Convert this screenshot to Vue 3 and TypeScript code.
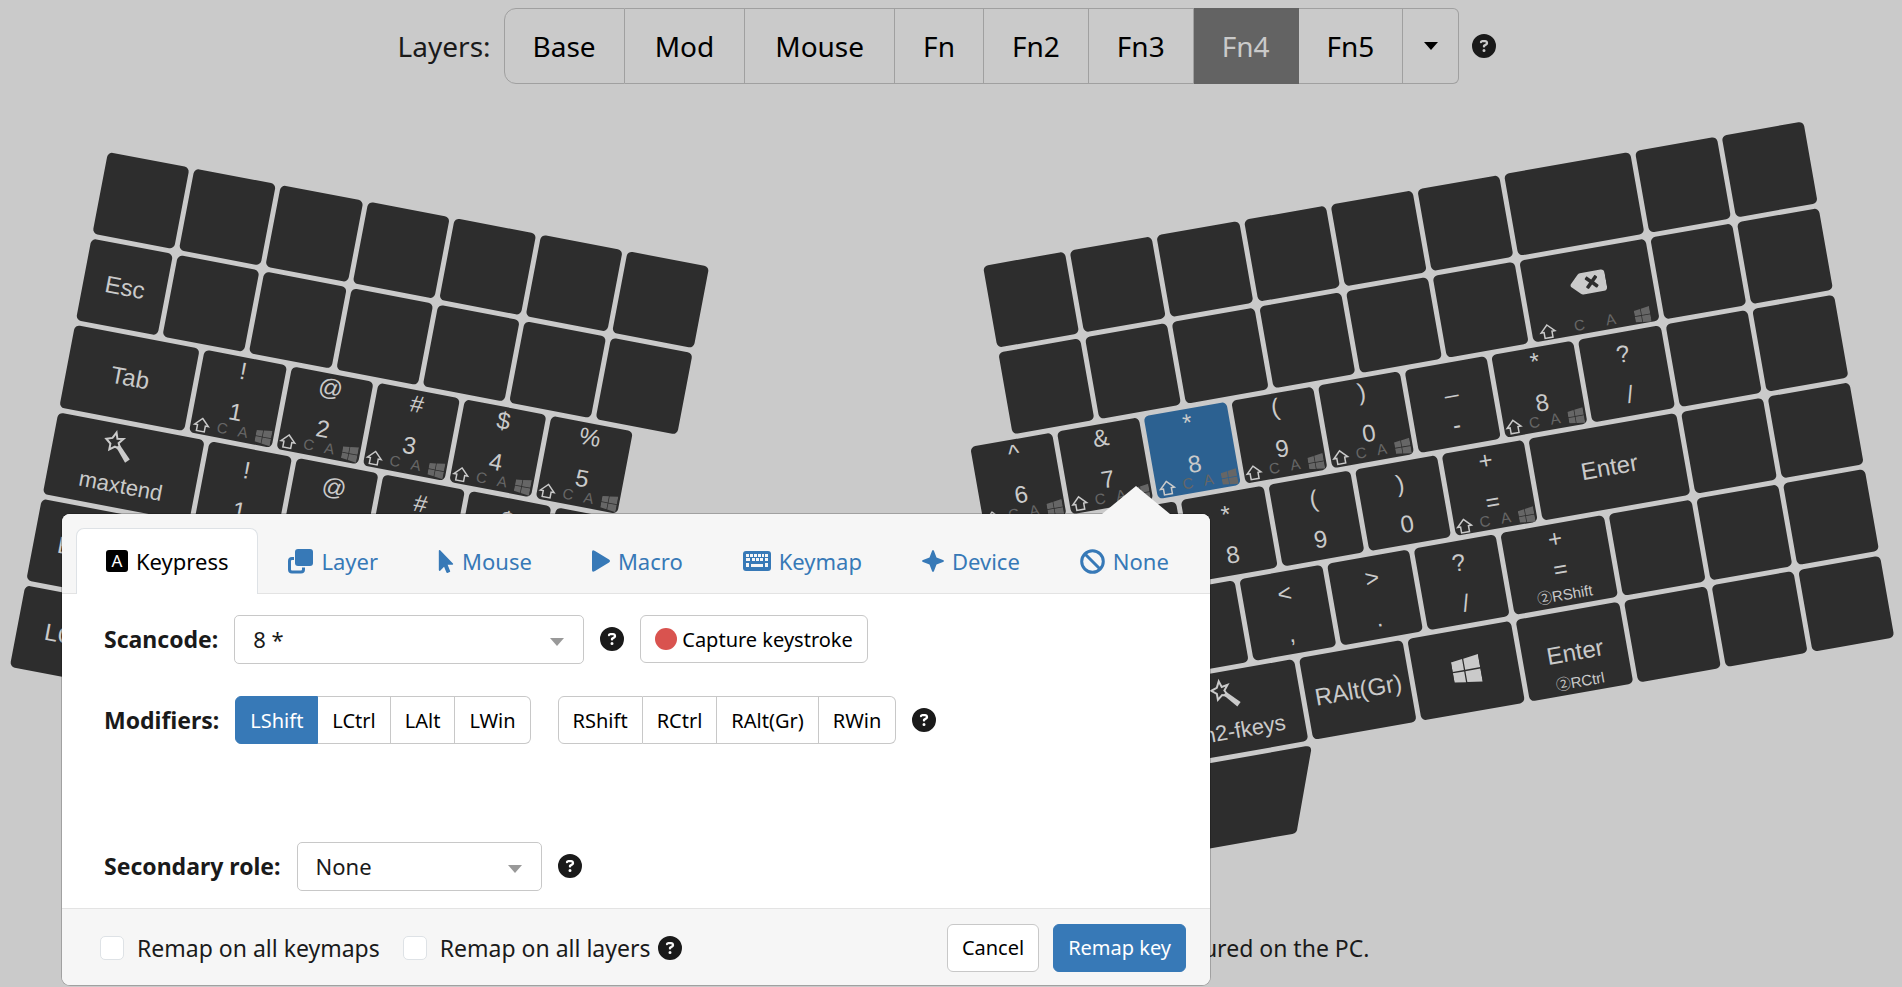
<script setup lang="ts">
import { ref } from 'vue'

interface Key {
  x: number
  y: number
  w: number
  label?: string
  top?: string
  bottom?: string
  role?: string
  icon?: 'wand' | 'win' | 'backspace'
  mods?: boolean
  selected?: boolean
}

/* Key positions and widths are in key units; one unit is PITCH wide. */
const PITCH = 88.2
const GAP = 5
const at = (units: number): number => Math.round(units * PITCH)
const keyWidth = (k: Key): number => at(k.x + k.w) - at(k.x) - GAP
const keyHeight = (k: Key): number => at(k.y + 1) - at(k.y) - GAP
const place = (k: Key): string => `translate(${at(k.x)} ${at(k.y)})`
const mid = (k: Key): number => Math.round(keyWidth(k) / 2)
const modX = (k: Key, i: number): number => Math.round((keyWidth(k) * (i * 2 + 1)) / 8)

const blanks = (y: number, from: number, count: number): Key[] =>
  Array.from({ length: count }, (_, i) => ({ x: from + i, y, w: 1 }))

const pairs = (y: number, from: number, list: string[], mods: boolean): Key[] =>
  list.map((p, i) => ({ x: from + i, y, w: 1, top: p[0], bottom: p[1], mods }))

const leftKeys: Key[] = [
  ...blanks(0, 0, 7),
  { x: 0, y: 1, w: 1, label: 'Esc' },
  ...blanks(1, 1, 6),
  { x: 0, y: 2, w: 1.5, label: 'Tab' },
  ...pairs(2, 1.5, ['!1', '@2', '#3', '$4', '%5'], true),
  { x: 0, y: 3, w: 1.75, label: 'maxtend', icon: 'wand' },
  ...pairs(3, 1.75, ['!1', '@2', '#3', '$4', '%5'], false),
  { x: 0, y: 4, w: 1.25, label: 'Enter' },
  { x: 0, y: 5, w: 1.25, label: 'LCtrl' },
]

const rightKeys: Key[] = [
  ...blanks(0, 0, 6),
  { x: 6, y: 0, w: 1.5 },
  ...blanks(0, 7.5, 2),
  ...blanks(1, 0, 6),
  { x: 6, y: 1, w: 1.5, icon: 'backspace', mods: true },
  ...blanks(1, 7.5, 2),
  ...pairs(2, -0.5, ['^6', '&7'], true),
  { x: 1.5, y: 2, w: 1, top: '*', bottom: '8', mods: true, selected: true },
  ...pairs(2, 2.5, ['(9', ')0'], true),
  { x: 4.5, y: 2, w: 1, top: '_', bottom: '-' },
  { x: 5.5, y: 2, w: 1, top: '*', bottom: '8', mods: true },
  { x: 6.5, y: 2, w: 1, top: '?', bottom: '/' },
  ...blanks(2, 7.5, 2),
  ...pairs(3, 0.75, ['&7', '*8', '(9', ')0'], false),
  { x: 4.75, y: 3, w: 1, top: '+', bottom: '=', mods: true },
  { x: 5.75, y: 3, w: 1.75, label: 'Enter' },
  ...blanks(3, 7.5, 2),
  { x: 1.25, y: 4, w: 1 },
  ...pairs(4, 2.25, ['<,', '>.', '?/'], false),
  { x: 5.25, y: 4, w: 1.25, top: '+', bottom: '=', role: 'RShift' },
  ...blanks(4, 6.5, 3),
  { x: 1.25, y: 5, w: 1.5, label: 'fn2-fkeys', icon: 'wand' },
  { x: 2.75, y: 5, w: 1.25, label: 'RAlt(Gr)' },
  { x: 4, y: 5, w: 1.25, icon: 'win' },
  { x: 5.25, y: 5, w: 1.25, label: 'Enter', role: 'RCtrl' },
  ...blanks(5, 6.5, 3),
]

const halves = [
  { name: 'left', transform: 'translate(108 152) rotate(10.8)', keys: leftKeys },
  { name: 'right', transform: 'translate(983 266) rotate(-10)', keys: rightKeys },
]

const topLine = (k: Key): number => (k.mods ? 22 : k.role ? 23 : 30)
const bottomLine = (k: Key): number => (k.mods ? 64 : k.role ? 54 : 71)

const layers = ['Base', 'Mod', 'Mouse', 'Fn', 'Fn2', 'Fn3', 'Fn4', 'Fn5']
const activeLayer = ref('Fn4')

const tabs = ['Keypress', 'Layer', 'Mouse', 'Macro', 'Keymap', 'Device', 'None']
const activeTab = ref('Keypress')

const modifierGroups = [
  ['LShift', 'LCtrl', 'LAlt', 'LWin'],
  ['RShift', 'RCtrl', 'RAlt(Gr)', 'RWin'],
]
const activeModifiers = ref<string[]>(['LShift'])
const toggleModifier = (name: string): void => {
  activeModifiers.value = activeModifiers.value.includes(name)
    ? activeModifiers.value.filter((m) => m !== name)
    : [...activeModifiers.value, name]
}
</script>

<template>
  <main class="page">
    <svg class="defs" aria-hidden="true">
      <symbol id="help" viewBox="0 0 512 512">
        <path d="M256 512A256 256 0 1 0 256 0a256 256 0 1 0 0 512zM169.8 165.3c7.9-22.3 29.1-37.3 52.8-37.3l58.3 0c34.9 0 63.1 28.3 63.1 63.1c0 22.6-12.1 43.5-31.7 54.8L280 264.4c-.2 13-10.9 23.6-24 23.6c-13.3 0-24-10.7-24-24l0-13.5c0-8.6 4.6-16.5 12.1-20.8l44.3-25.4c4.7-2.7 7.6-7.7 7.6-13.1c0-8.4-6.8-15.1-15.1-15.1l-58.3 0c-3.4 0-6.4 2.1-7.5 5.3l-.4 1.2c-4.4 12.5-18.2 19-30.6 14.6s-19-18.2-14.6-30.6l.4-1.2zM224 352a32 32 0 1 1 64 0 32 32 0 1 1 -64 0z" />
      </symbol>
      <symbol id="windows" viewBox="0 0 448 512">
        <path d="M0 93.7l183.6-25.3v177.4H0V93.7zm0 324.6l183.6 25.3V268.4H0v149.9zm203.8 28L448 480V268.4H203.8v177.9zm0-380.6v180.1H448V32L203.8 65.7z" />
      </symbol>
      <symbol id="backspace" viewBox="0 0 640 512">
        <path d="M576 64H205.26A63.97 63.97 0 0 0 160 82.75L9.37 233.37c-12.5 12.5-12.5 32.76 0 45.25L160 429.25c12 12 28.28 18.75 45.25 18.75H576c35.35 0 64-28.65 64-64V128c0-35.35-28.65-64-64-64zm-84.69 254.06c6.25 6.25 6.25 16.38 0 22.63l-22.62 22.62c-6.25 6.25-16.38 6.25-22.63 0L384 301.25l-62.06 62.06c-6.25 6.25-16.38 6.25-22.63 0l-22.62-22.62c-6.25-6.25-6.25-16.38 0-22.63L338.75 256l-62.06-62.06c-6.25-6.25-6.25-16.38 0-22.63l22.62-22.62c6.25-6.25 16.38-6.25 22.63 0L384 210.75l62.06-62.06c6.25-6.25 16.38-6.25 22.63 0l22.62 22.62c6.25 6.25 6.25 16.38 0 22.63L429.25 256l62.06 62.06z" />
      </symbol>
    </svg>

    <nav class="layers" aria-label="Layers">
      <span class="layers-title">Layers:</span>
      <div class="layer-group">
        <button
          v-for="layer in layers"
          :key="layer"
          type="button"
          class="layer"
          :class="{ active: layer === activeLayer }"
          @click="activeLayer = layer"
        >{{ layer }}</button>
        <button type="button" class="layer layer-more" aria-label="More layers">
          <svg width="14" height="8" viewBox="0 0 14 8"><path d="M0 0h14L7 8z" /></svg>
        </button>
      </div>
      <svg class="help" role="img" aria-label="Help"><use href="#help" /></svg>
    </nav>

    <section class="stage">
      <svg class="keyboard" viewBox="0 92 1902 830">
        <g v-for="half in halves" :key="half.name" :transform="half.transform">
          <path
            v-if="half.name === 'right'"
            class="cap"
            d="M-80 529H234q6 0 5 5L212 608q-1 5-6 5H-80z"
          />
          <g v-for="(k, i) in half.keys" :key="i" :transform="place(k)">
            <rect class="cap" :class="{ selected: k.selected }" :width="keyWidth(k)" :height="keyHeight(k)" rx="5" />
            <text v-if="k.top" :x="mid(k)" :y="topLine(k)">{{ k.top }}</text>
            <text v-if="k.bottom" :x="mid(k)" :y="bottomLine(k)">{{ k.bottom }}</text>
            <text v-if="k.label" :class="{ macro: k.icon }" :x="mid(k)" :y="k.icon ? 68 : 50">{{ k.label }}</text>
            <text v-if="k.role" class="role" :x="mid(k)" y="77">②{{ k.role }}</text>
            <g v-if="k.icon === 'wand'" :transform="`translate(${mid(k) - 14} 18)`">
              <path class="star" d="M0 -9L2 -3L8 -4L4 1L7 7L1 5L-4 9L-4 3L-9 -1L-3 -3Z" />
              <path class="glyph" d="M2 5L6 3L18 15L14 19Z" />
            </g>
            <use v-if="k.icon === 'win'" class="glyph" href="#windows" :x="mid(k) - 14" y="25" width="28" height="32" />
            <use v-if="k.icon === 'backspace'" class="glyph" href="#backspace" :x="mid(k) - 18" y="19" width="36" height="29" />
            <g v-if="k.mods">
              <path class="shift" :transform="`translate(${modX(k, 0)} 75)`" d="M0 -7L7 0H4V6H-4V0H-7Z" />
              <text class="mod" :x="modX(k, 1)" y="79">C</text>
              <text class="mod" :x="modX(k, 2)" y="79">A</text>
              <use class="mod" href="#windows" :x="modX(k, 3) - 8" y="66" width="16" height="18" />
            </g>
          </g>
        </g>
      </svg>

      <form class="popover" @submit.prevent>
        <svg class="arrow" viewBox="0 0 68 28" aria-hidden="true"><path d="M0 28L34 0L68 28z" /></svg>
        <div class="tabs" role="tablist">
          <button
            v-for="tab in tabs"
            :key="tab"
            type="button"
            role="tab"
            class="tab"
            :class="{ active: tab === activeTab }"
            :aria-selected="tab === activeTab"
            @click="activeTab = tab"
          >
            <svg v-if="tab === 'Keypress'" width="22" height="22" viewBox="0 0 22 22">
              <rect width="22" height="22" rx="3" />
              <text class="tab-letter" x="11" y="17">A</text>
            </svg>
            <svg v-else-if="tab === 'Layer'" width="25" height="25" viewBox="0 0 25 25">
              <rect x="7" width="18" height="17" rx="3" />
              <path class="line" d="M6 9.5H4A2.5 2.5 0 0 0 1.5 12V20.500A2.500 2.500 0 0 0 4 23H13A2.500 2.500 0 0 0 15.500 20.500V18.500" />
            </svg>
            <svg v-else-if="tab === 'Mouse'" width="16" height="23" viewBox="0 0 320 512">
              <path d="M302.189 329.126H196.105l55.831 135.993c3.889 9.428-.555 19.999-9.444 23.999l-49.165 21.427c-9.165 4-19.443-.571-23.332-9.714l-53.053-129.136-86.664 89.138C18.729 472.71 0 463.554 0 447.977V18.299C0 1.899 19.921-6.096 30.277 5.443l284.412 292.542c11.472 11.179 3.007 31.141-12.5 31.141z" />
            </svg>
            <svg v-else-if="tab === 'Macro'" width="18" height="22" viewBox="0 0 18 22">
              <path d="M0 2Q0-1 3 1L17 9.500Q19 11 17 12.500L3 21Q0 23 0 20Z" />
            </svg>
            <svg v-else-if="tab === 'Keymap'" width="28" height="20" viewBox="0 0 28 20">
              <rect width="28" height="20" rx="3" />
              <path class="gap" d="M3 3h3v3h-3zM7 3h3v3h-3zM11 3h3v3h-3zM15 3h3v3h-3zM19 3h2v3h-2zM22 3h3v3h-3zM3 7h4v3h-4zM9 7h3v3h-3zM13 7h3v3h-3zM17 7h3v3h-3zM22 7h3v3h-3zM3 12h3v4h-3zM8 13h12v3h-12zM22 12h3v4h-3z" />
            </svg>
            <svg v-else-if="tab === 'Device'" width="22" height="22" viewBox="0 0 22 22">
              <path d="M10 1Q11 -1 12 1L14.500 7.500L21 10Q23 11 21 12L14.500 14.500L12 21Q11 23 10 21L7.500 14.500L1 12Q-1 11 1 10L7.500 7.500Z" />
            </svg>
            <svg v-else width="25" height="25" viewBox="0 0 25 25">
              <circle class="line" cx="12.500" cy="12.500" r="10.800" />
              <path class="line" d="M5 5L20 20" />
            </svg>
            {{ tab }}
          </button>
        </div>

        <div class="body">
          <div class="row">
            <label class="caption" for="scancode">Scancode:</label>
            <span class="select scancode">
              <select id="scancode"><option>8 *</option></select>
              <svg class="caret" viewBox="0 0 14 8"><path d="M0 0h14L7 8z" /></svg>
            </span>
            <svg class="help" role="img" aria-label="Help"><use href="#help" /></svg>
            <button type="button" class="btn capture"><i class="dot"></i>Capture keystroke</button>
          </div>
          <div class="row modifiers">
            <span class="caption">Modifiers:</span>
            <div v-for="group in modifierGroups" :key="group[0]" class="mod-group">
              <button
                v-for="name in group"
                :key="name"
                type="button"
                class="mod-button"
                :class="{ active: activeModifiers.includes(name) }"
                @click="toggleModifier(name)"
              >{{ name }}</button>
            </div>
            <svg class="help" role="img" aria-label="Help"><use href="#help" /></svg>
          </div>
          <div class="row secondary">
            <label class="caption" for="secondary">Secondary role:</label>
            <span class="select role-select">
              <select id="secondary"><option>None</option></select>
              <svg class="caret" viewBox="0 0 14 8"><path d="M0 0h14L7 8z" /></svg>
            </span>
            <svg class="help" role="img" aria-label="Help"><use href="#help" /></svg>
          </div>
        </div>

        <footer class="footer">
          <label class="check"><input type="checkbox" />Remap on all keymaps</label>
          <label class="check"><input type="checkbox" />Remap on all layers</label>
          <svg class="help" role="img" aria-label="Help"><use href="#help" /></svg>
          <button type="button" class="btn cancel">Cancel</button>
          <button type="submit" class="btn primary">Remap key</button>
        </footer>
      </form>
    </section>

    <p class="note">ured on the PC.</p>
  </main>
</template>

<style>
body {
  margin: 0;
  background: #cacaca;
}
</style>

<style scoped>
.page {
  min-height: 100vh;
  box-sizing: border-box;
  overflow: hidden;
  background: #cacaca;
  color: #1a1a1a;
  font-family: "Noto Sans", "Open Sans", sans-serif;
  font-size: 22px;
}
.page *,
.page *::before {
  box-sizing: border-box;
}
.defs {
  position: absolute;
  width: 0;
  height: 0;
}
button,
select,
input {
  font: inherit;
  color: inherit;
  margin: 0;
}
.help {
  flex: none;
  width: 24px;
  height: 24px;
  fill: #1a1a1a;
}

.layers {
  display: flex;
  align-items: center;
  justify-content: center;
  height: 92px;
  padding-right: 8px;
  font-size: 28px;
}
.layer-group {
  display: flex;
  height: 76px;
  margin: 0 13px;
}
.layer {
  padding: 0 28px;
  border: 1px solid #a0a0a0;
  border-left-width: 0;
  background: transparent;
  color: #000;
}
.layer:first-child {
  border-left-width: 1px;
  border-radius: 12px 0 0 12px;
}
.layer.active {
  background: #636363;
  border-color: #636363;
  color: #cacaca;
}
.layer:nth-child(2),
.layer:nth-child(3) {
  padding: 0 30px;
}
.layer-more {
  width: 56px;
  padding: 0;
  border-radius: 0 6px 6px 0;
}
.layer-more svg {
  display: block;
  margin: auto;
}

.stage {
  position: relative;
}
.keyboard {
  display: block;
  width: 100%;
  height: auto;
  font-family: "Liberation Sans", Arial, "Noto Sans CJK SC", sans-serif;
  font-size: 24px;
}
.keyboard text {
  fill: #cacaca;
  text-anchor: middle;
}
.cap {
  fill: #2d2d2d;
}
.cap.selected {
  fill: #2c6191;
}
.glyph {
  fill: #cacaca;
}
.star,
.shift {
  fill: none;
  stroke: #cacaca;
}
.star {
  stroke-width: 2;
}
.shift {
  stroke-width: 1.5;
}
.keyboard .mod {
  fill: #666;
  font-size: 15px;
}
.keyboard .macro {
  font-size: 22px;
}
.keyboard .role {
  font-size: 15px;
}

.popover {
  position: absolute;
  top: 50.8%;
  left: 3.26%;
  width: 60.36%;
  border-radius: 8px;
  background: #fff;
  box-shadow: 0 0 0 1px rgba(0, 0, 0, 0.2);
}
.arrow {
  position: absolute;
  bottom: 100%;
  right: 40px;
  width: 68px;
  height: 28px;
  fill: #f6f6f6;
}
.tabs {
  display: flex;
  align-items: flex-end;
  height: 80px;
  padding: 14px 14px 0;
  border-bottom: 1px solid #e3e3e3;
  border-radius: 8px 8px 0 0;
  background: #f6f6f6;
}
.tab {
  display: flex;
  align-items: center;
  gap: 8px;
  height: 66px;
  margin-bottom: -1px;
  padding: 0 29px;
  border: 1px solid transparent;
  border-bottom: 0;
  border-radius: 8px 8px 0 0;
  background: transparent;
  color: #3779b7;
  fill: #3779b7;
  white-space: nowrap;
}
.tab.active {
  border-color: #dee2e6;
  background: #fff;
  color: #000;
  fill: #000;
}
.tab-letter {
  fill: #fff;
  font-size: 17px;
  text-anchor: middle;
}
.tab .line {
  fill: none;
  stroke: #3779b7;
  stroke-width: 3;
}
.tab .gap {
  fill: #f6f6f6;
}

.body {
  padding: 21px 42px 17px;
}
.row {
  display: flex;
  align-items: center;
  min-height: 49px;
}
.modifiers {
  margin-top: 32px;
}
.secondary {
  margin-top: 97px;
}
.caption {
  margin-right: 16px;
  font-size: 23px;
  font-weight: 700;
}
.row > .help {
  margin-left: 16px;
}
.select {
  position: relative;
  height: 49px;
}
.scancode {
  width: 350px;
}
.role-select {
  width: 245px;
}
.select select {
  width: 100%;
  height: 100%;
  padding: 0 48px 0 18px;
  border: 1px solid #c8c8c8;
  border-radius: 5px;
  background: #fff;
  appearance: none;
}
.caret {
  position: absolute;
  top: 23px;
  right: 20px;
  width: 14px;
  height: 8px;
  fill: #999;
  pointer-events: none;
}
.btn {
  height: 48px;
  padding: 0 14px;
  border: 1px solid #c8c8c8;
  border-radius: 6px;
  background: #fff;
  color: #000;
  font-size: 20px;
  white-space: nowrap;
}
.capture {
  display: flex;
  align-items: center;
  gap: 5px;
  margin-left: 16px;
}
.dot {
  width: 22px;
  height: 22px;
  border-radius: 50%;
  background: #d9534f;
}
.mod-group {
  display: flex;
  height: 48px;
}
.mod-group + .mod-group {
  margin-left: 27px;
}
.mod-button {
  padding: 0 14px;
  border: 1px solid #c8c8c8;
  border-left-width: 0;
  background: #fff;
  color: #000;
  font-size: 20px;
}
.mod-button:first-child {
  border-left-width: 1px;
  border-radius: 6px 0 0 6px;
}
.mod-button:last-child {
  border-radius: 0 6px 6px 0;
}
.mod-button.active,
.btn.primary {
  border-color: #3779b7;
  background: #3779b7;
  color: #fff;
}

.footer {
  display: flex;
  align-items: center;
  height: 77px;
  padding: 2px 24px 0 38px;
  border-top: 1px solid #e3e3e3;
  border-radius: 0 0 8px 8px;
  background: #f6f6f6;
  font-size: 23px;
}
.check {
  display: flex;
  align-items: center;
  gap: 13px;
}
.check + .check {
  margin-left: 23px;
}
.check input {
  width: 24px;
  height: 24px;
  border: 1px solid #dee2e6;
  border-radius: 5px;
  background: #fff;
  appearance: none;
}
.footer .help {
  margin-left: 7px;
}
.cancel {
  margin-left: auto;
}
.primary {
  margin-left: 14px;
}
.note {
  margin: 0;
  padding-right: 28%;
  font-size: 23px;
  line-height: 52px;
  text-align: right;
}
</style>
